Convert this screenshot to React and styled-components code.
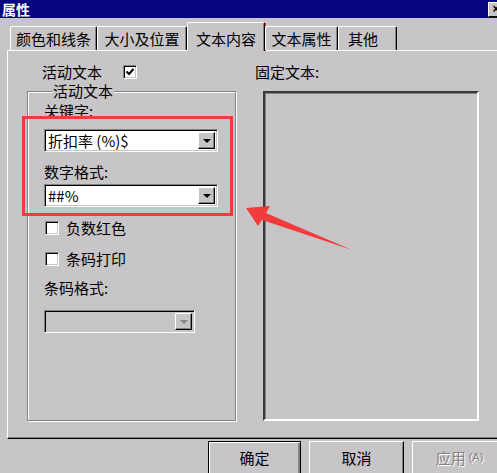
import React from 'react';
import styled, { createGlobalStyle } from 'styled-components';

const GREY = '#c8c5c8';
const DARK = '#848284';
const RED = '#f23c3c';

const GlobalStyle = createGlobalStyle`
  html, body {
    margin: 0;
    padding: 0;
    background: ${GREY};
  }
  body {
    font-family: "Noto Sans CJK SC", "Liberation Sans", sans-serif;
  }
`;

const Window = styled.div`
  position: relative;
  width: 497px;
  height: 473px;
  overflow: hidden;
  background: ${GREY};
  color: #000;
  font-size: 15px;
  line-height: 15px;
`;

const TitleBar = styled.div`
  height: 18px;
  background: #06067f;
  display: flex;
  align-items: center;
  justify-content: space-between;
  padding-left: 2px;
`;

const Title = styled.span`
  color: #fff;
  font-weight: bold;
  font-size: 14px;
  line-height: 18px;
`;

const CloseBtn = styled.div`
  box-sizing: border-box;
  width: 16px;
  height: 15px;
  margin-right: -7px;
  background: ${GREY};
  border: 1px solid;
  border-color: #fff #000 #000 #fff;
  font-family: "Liberation Sans", sans-serif;
  font-size: 12px;
  line-height: 12px;
  font-weight: bold;
  display: flex;
  align-items: center;
  justify-content: center;
`;

const TabRow = styled.div`
  position: relative;
  z-index: 1;
  display: flex;
  align-items: flex-end;
  height: 28px;
  margin-top: 4px;
  padding-left: 10px;
`;

const Tab = styled.div`
  box-sizing: border-box;
  width: ${(p) => p.$w}px;
  height: ${(p) => (p.$active ? 29 : 24)}px;
  margin-bottom: ${(p) => (p.$active ? -1 : 0)}px;
  padding-top: ${(p) => (p.$active ? 8 : 4)}px;
  padding-left: ${(p) => (p.$left ? 9 : 0)}px;
  display: flex;
  justify-content: ${(p) => (p.$left ? 'flex-start' : 'center')};
  background: ${GREY};
  border-top: 1px solid #fff;
  border-left: 1px solid #fff;
  border-right: 1px solid #000;
  border-radius: 2px 2px 0 0;
  box-shadow: inset -1px 0 0 ${DARK};
`;

const Panel = styled.div`
  box-sizing: border-box;
  width: 540px;
  height: 389px;
  margin-left: 7px;
  padding-top: 13px;
  display: flex;
  border-top: 1px solid #fff;
  border-left: 1px solid #fff;
  border-bottom: 1px solid #000;
  box-shadow: inset 0 -1px 0 ${DARK};
`;

const LeftCol = styled.div`
  width: 209px;
  margin-left: 19px;
  display: flex;
  flex-direction: column;
`;

const RightCol = styled.div`
  margin-left: 19px;
  display: flex;
  flex-direction: column;
`;

const TopRow = styled.div`
  display: flex;
  align-items: center;
  gap: 21px;
  padding-left: 15px;
  height: 15px;
`;

const Group = styled.fieldset`
  box-sizing: border-box;
  margin: 5px 0 0;
  padding: 5px 0 0 16px;
  min-width: 0;
  height: 337px;
  border: 1px solid ${DARK};
  box-shadow: inset 1px 1px 0 #fff, 1px 1px 0 #fff;
`;

const Legend = styled.legend`
  margin-left: 8px;
  padding: 0 1px;
  height: 14px;
  background: ${GREY};
  line-height: 13px;
`;

const Label = styled.div`
  height: 15px;
  margin-top: ${(p) => p.$mt || 0}px;
`;

const Select = styled.div`
  box-sizing: border-box;
  width: ${(p) => p.$w}px;
  height: 23px;
  margin-top: ${(p) => p.$mt || 0}px;
  display: flex;
  align-items: center;
  justify-content: space-between;
  padding: 0 2px 0 3px;
  background: ${(p) => (p.$disabled ? GREY : '#fff')};
  border: 1px solid;
  border-color: ${DARK} #fff #fff ${DARK};
  box-shadow: inset 1px 1px 0 #000, inset -1px -1px 0 ${GREY};
`;

const SelectText = styled.span`
  font-size: 15px;
`;

const DropBtn = styled.div`
  box-sizing: border-box;
  width: 17px;
  height: 17px;
  background: ${GREY};
  border: 1px solid;
  border-color: #fff #000 #000 #fff;
  box-shadow: inset -1px -1px 0 ${DARK};
  display: flex;
  align-items: center;
  justify-content: center;
  &::after {
    content: '';
    border-left: 4px solid transparent;
    border-right: 4px solid transparent;
    border-top: 4px solid ${(p) => (p.$disabled ? DARK : '#000')};
    margin-top: 1px;
  }
`;

const CheckRow = styled.div`
  display: flex;
  align-items: center;
  gap: 7px;
  padding-left: 1px;
  margin-top: ${(p) => p.$mt || 0}px;
  height: 15px;
`;

const Box = styled.div`
  box-sizing: border-box;
  width: 14px;
  height: 14px;
  flex: none;
  background: #fff;
  border: 1px solid;
  border-color: ${DARK} #fff #fff ${DARK};
  box-shadow: inset 1px 1px 0 #000, inset -1px -1px 0 ${GREY};
  display: flex;
  align-items: center;
  justify-content: center;
`;

const FixedBox = styled.div`
  box-sizing: border-box;
  width: 216px;
  height: 330px;
  margin: 12px 0 0 8px;
  border: 2px solid;
  border-color: #3a383a #fff #fff #3a383a;
  box-shadow: inset 1px 1px 0 ${DARK};
`;

const Footer = styled.div`
  display: flex;
  gap: 8px;
  padding: 2px 0 0 208px;
`;

const Button = styled.div`
  box-sizing: border-box;
  flex: none;
  width: ${(p) => p.$w}px;
  height: 36px;
  padding-top: 8px;
  display: flex;
  justify-content: center;
  background: ${GREY};
  border: 1px solid;
  border-color: ${(p) => (p.$default ? '#000' : '#fff #000 #000 #fff')};
  box-shadow: ${(p) =>
    p.$default
      ? `inset 1px 1px 0 #fff, inset -2px -2px 0 ${DARK}`
      : `inset -1px -1px 0 ${DARK}`};
  color: ${(p) => (p.$disabled ? DARK : '#000')};
  text-shadow: ${(p) => (p.$disabled ? '1px 1px 0 #fff' : 'none')};
`;

const Small = styled.span`
  font-size: 11px;
  margin-left: 3px;
  font-family: "Liberation Sans", sans-serif;
`;

const Highlight = styled.div`
  position: absolute;
  box-sizing: border-box;
  left: ${(p) => p.$x}px;
  top: ${(p) => p.$y}px;
  width: ${(p) => p.$w}px;
  height: ${(p) => p.$h}px;
  border: 3px solid ${RED};
  pointer-events: none;
`;

const Overlay = styled.svg`
  position: absolute;
  left: 0;
  top: 0;
  pointer-events: none;
`;

const Check = () => (
  <svg width="10" height="10" viewBox="0 0 10 10">
    <path d="M1.5 4.5 L4 7 L8.5 2" fill="none" stroke="#000" strokeWidth="2" />
  </svg>
);

const tabs = [
  { label: '颜色和线条', w: 87 },
  { label: '大小及位置', w: 90 },
  { label: '文本内容', w: 78, active: true },
  { label: '文本属性', w: 73 },
  { label: '其他', w: 59, left: true },
];

export default function App() {
  return (
    <Window>
      <GlobalStyle />
      <TitleBar>
        <Title>属性</Title>
        <CloseBtn>×</CloseBtn>
      </TitleBar>

      <TabRow>
        {tabs.map((t) => (
          <Tab key={t.label} $w={t.w} $active={t.active} $left={t.left}>
            {t.label}
          </Tab>
        ))}
      </TabRow>

      <Panel>
        <LeftCol>
          <TopRow>
            活动文本
            <Box>
              <Check />
            </Box>
          </TopRow>
          <Group>
            <Legend>活动文本</Legend>
            <Label>关键字:</Label>
            <Select $w={174} $mt={11}>
              <SelectText>折扣率 (%)$</SelectText>
              <DropBtn />
            </Select>
            <Label $mt={12}>数字格式:</Label>
            <Select $w={174} $mt={5}>
              <SelectText>##%</SelectText>
              <DropBtn />
            </Select>
            <CheckRow $mt={13}>
              <Box />
              负数红色
            </CheckRow>
            <CheckRow $mt={16}>
              <Box />
              条码打印
            </CheckRow>
            <Label $mt={14}>条码格式:</Label>
            <Select $w={151} $mt={15} $disabled>
              <span />
              <DropBtn $disabled />
            </Select>
          </Group>
        </LeftCol>
        <RightCol>
          <Label>固定文本:</Label>
          <FixedBox />
        </RightCol>
      </Panel>

      <Footer>
        <Button $w={93} $default>确定</Button>
        <Button $w={95}>取消</Button>
        <Button $w={95} $disabled>
          应用<Small>(A)</Small>
        </Button>
      </Footer>

      <Highlight $x={187} $y={23} $w={79} $h={28} />
      <Highlight $x={22} $y={116} $w={211} $h={100} />
      <Overlay width="497" height="473">
        <polygon
          points="246,208 270,206 266,213 352,250 262,220 258,226"
          fill={RED}
        />
      </Overlay>
    </Window>
  );
}
